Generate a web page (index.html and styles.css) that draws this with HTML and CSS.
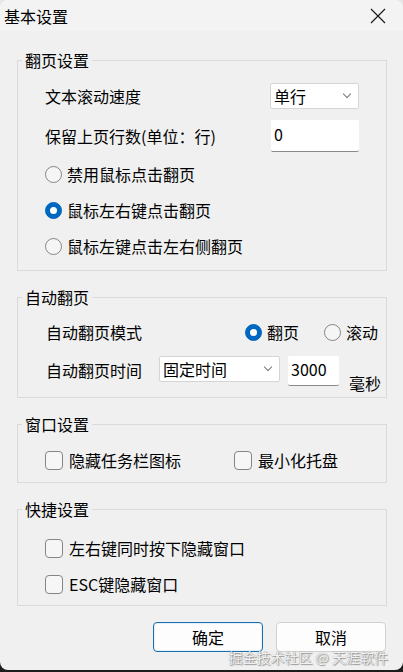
FILE: index.html
```html
<!DOCTYPE html>
<html lang="zh-CN">
<head>
    <meta charset="UTF-8">
    <meta name="viewport" content="width=device-width, initial-scale=1.0">
    <title>基本设置</title>
    <link rel="stylesheet" href="styles.css">
</head>
<body>

    <div class="window">
        <!-- 标题栏 -->
        <div class="titlebar">
            <span class="title">基本设置</span>
            <svg class="close" width="16" height="16" viewBox="0 0 16 16">
                <path d="M1 1 L15 15 M15 1 L1 15" stroke="#1a1a1a" stroke-width="1.2" fill="none"/>
            </svg>
        </div>

        <div class="content">

            <!-- 翻页设置 -->
            <fieldset class="group">
                <legend>翻页设置</legend>
                <div class="group-body g-page">
                    <div class="row row-speed">
                        <span>文本滚动速度</span>
                        <span class="select sel-speed">单行<i class="chev"></i></span>
                    </div>
                    <div class="row row-keep">
                        <span>保留上页行数(单位：行)</span>
                        <span class="input inp-keep">0</span>
                    </div>
                    <div class="row radio-row first">
                        <span class="radio"></span>禁用鼠标点击翻页
                    </div>
                    <div class="row radio-row">
                        <span class="radio checked"></span>鼠标左右键点击翻页
                    </div>
                    <div class="row radio-row">
                        <span class="radio"></span>鼠标左键点击左右侧翻页
                    </div>
                </div>
            </fieldset>

            <!-- 自动翻页 -->
            <fieldset class="group">
                <legend>自动翻页</legend>
                <div class="group-body g-auto">
                    <div class="row row-mode">
                        <span>自动翻页模式</span>
                        <div class="radios">
                            <span class="opt"><span class="radio checked"></span>翻页</span>
                            <span class="opt"><span class="radio"></span>滚动</span>
                        </div>
                    </div>
                    <div class="row row-time">
                        <span class="time-label">自动翻页时间</span>
                        <span class="select sel-time">固定时间<i class="chev"></i></span>
                        <span class="input inp-time">3000</span>
                        <span class="unit">毫秒</span>
                    </div>
                </div>
            </fieldset>

            <!-- 窗口设置 -->
            <fieldset class="group">
                <legend>窗口设置</legend>
                <div class="group-body g-window">
                    <div class="row check-row">
                        <span class="opt opt-wide"><span class="checkbox"></span>隐藏任务栏图标</span>
                        <span class="opt"><span class="checkbox"></span>最小化托盘</span>
                    </div>
                </div>
            </fieldset>

            <!-- 快捷设置 -->
            <fieldset class="group">
                <legend>快捷设置</legend>
                <div class="group-body g-keys">
                    <div class="row check-row first">
                        <span class="opt"><span class="checkbox"></span>左右键同时按下隐藏窗口</span>
                    </div>
                    <div class="row check-row second">
                        <span class="opt"><span class="checkbox"></span>ESC键隐藏窗口</span>
                    </div>
                </div>
            </fieldset>

            <div class="buttons">
                <button class="btn primary">确定</button>
                <button class="btn">取消</button>
            </div>
        </div>

        <div class="watermark">掘金技术社区 @ 天涯软件</div>
    </div>

</body>
</html>
```

FILE: styles.css
```css
* {
    margin: 0;
    padding: 0;
    box-sizing: border-box;
}

body {
    font-family: "Noto Sans CJK SC", "Noto Sans", sans-serif;
    font-size: 16px;
    line-height: 20px;
    color: #000;
    background: linear-gradient(to bottom, #e6e6e6 0, #e6e6e6 50%, #1c1c1c 50%);
    width: 403px;
    height: 672px;
    overflow: hidden;
}

.window {
    position: relative;
    width: 403px;
    height: 670px;
    background: #f0f0f0;
    border-radius: 8px;
    overflow: hidden;
}

/* 标题栏 */
.titlebar {
    height: 31px;
    display: flex;
    align-items: center;
    justify-content: space-between;
    padding: 0 17px 0 4px;
    background: #f3f3f3;
}

.title {
    font-size: 16px;
}

.close {
    display: block;
}

.content {
    padding: 19px 16px 0 17px;
}

/* 分组框 */
.group {
    border: 1px solid #dadada;
    padding: 0;
    margin: 0;
    min-width: 0;
}

.group + .group {
    margin-top: 16px;
}

.group legend {
    margin-left: 4px;
    padding: 0 3px;
    line-height: 20px;
}

.group-body {
    padding-left: 27px;
}

.row {
    display: flex;
    align-items: center;
    white-space: nowrap;
}

/* 翻页设置 */
.g-page {
    padding-right: 27px;
    padding-bottom: 6px;
}

.row-speed {
    height: 26px;
    margin-top: 13px;
    justify-content: space-between;
}

.row-keep {
    height: 32px;
    margin-top: 11px;
    justify-content: space-between;
}

.radio-row {
    height: 36px;
}

.radio-row.first {
    margin-top: 4px;
}

.select {
    position: relative;
    display: flex;
    align-items: center;
    height: 26px;
    padding-left: 3px;
    background: #fff;
    border: 1px solid #d5d5d5;
    border-radius: 2px;
    flex-shrink: 0;
}

.chev {
    position: absolute;
    right: 8px;
    top: 7px;
    width: 6px;
    height: 6px;
    border-right: 1px solid #777;
    border-bottom: 1px solid #777;
    transform: rotate(45deg);
}

.sel-speed {
    width: 89px;
}

.input {
    display: flex;
    align-items: center;
    background: #fff;
    border-bottom: 1px solid #8a8a8a;
    border-radius: 2px;
    padding-left: 3px;
    padding-bottom: 4px;
    flex-shrink: 0;
}

.inp-keep {
    width: 88px;
    height: 32px;
}

.radio {
    width: 17px;
    height: 17px;
    border: 1px solid #858585;
    border-radius: 50%;
    background: #f5f5f5;
    margin-right: 5px;
    flex-shrink: 0;
    position: relative;
}

.radio.checked {
    background: #0067c0;
    border-color: #0067c0;
}

.radio.checked::after {
    content: "";
    position: absolute;
    left: 4px;
    top: 4px;
    width: 7px;
    height: 7px;
    border-radius: 50%;
    background: #fff;
}

/* 自动翻页 */
.g-auto {
    padding-left: 28px;
    padding-right: 8px;
    padding-bottom: 4px;
}

.row-mode {
    height: 28px;
    margin-top: 11px;
    justify-content: space-between;
}

.radios {
    display: flex;
    gap: 25px;
}

.opt {
    display: flex;
    align-items: center;
    white-space: nowrap;
}

.row-time {
    align-items: flex-start;
    margin-top: 9px;
}

.time-label {
    line-height: 30px;
    flex-shrink: 0;
}

.sel-time {
    width: 121px;
    margin-top: 1px;
    margin-left: 17px;
}

.inp-time {
    width: 51px;
    height: 30px;
    margin-top: 1px;
    margin-left: 8px;
}

.unit {
    margin-top: 18px;
    margin-left: 10px;
    flex-shrink: 0;
}

/* 窗口设置 / 快捷设置 */
.checkbox {
    width: 18px;
    height: 19px;
    border: 1px solid #858585;
    border-radius: 4px;
    background: #f6f6f6;
    margin-right: 6px;
    flex-shrink: 0;
}

.check-row {
    height: 24px;
}

.g-window {
    padding-bottom: 10px;
}

.g-window .check-row {
    margin-top: 14px;
}

.opt-wide {
    width: 189px;
}

.g-keys {
    padding-bottom: 9px;
}

.g-keys .check-row.first {
    margin-top: 17px;
}

.g-keys .check-row.second {
    margin-top: 12px;
}

/* 按钮 */
.buttons {
    display: flex;
    justify-content: flex-end;
    gap: 13px;
    margin-top: 16px;
    margin-right: 1px;
}

.btn {
    width: 110px;
    height: 30px;
    font-family: inherit;
    font-size: 16px;
    line-height: 20px;
    background: #fdfdfd;
    border: 1px solid #d0d0d0;
    border-radius: 4px;
    color: #000;
}

.btn.primary {
    border: 1px solid #1a6fb0;
    box-shadow: inset 0 0 0 1px #e6f0f8;
}

.watermark {
    position: absolute;
    right: 15px;
    bottom: 5px;
    font-size: 14px;
    line-height: 16px;
    color: rgba(255, 255, 255, 0.9);
    text-shadow: 0 0 1px #777, 1px 1px 1px rgba(0, 0, 0, 0.35);
}
```
